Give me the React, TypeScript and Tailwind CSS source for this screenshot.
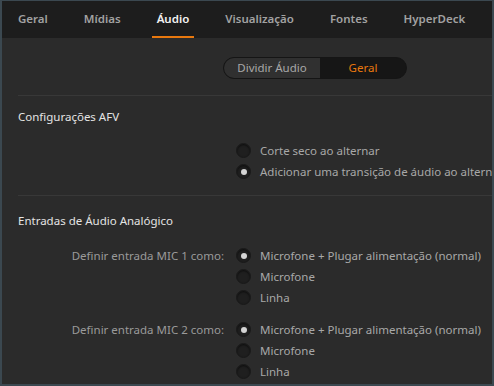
import React from 'react';

const TABS = ['Geral', 'Mídias', 'Áudio', 'Visualização', 'Fontes', 'HyperDeck'];

function Radio({ checked }: { checked?: boolean }) {
  return (
    <span className="flex h-[15px] w-[15px] shrink-0 items-center justify-center rounded-full border border-[#191919] bg-[#1f1f1f] shadow-[inset_0_1px_2px_rgba(0,0,0,0.6)]">
      {checked && <span className="h-[6px] w-[6px] rounded-full bg-[#d4d4d4]" />}
    </span>
  );
}

function RadioGroup({ label, options, selected }: { label?: string; options: string[]; selected: number }) {
  return (
    <div className="flex">
      <div className="w-[222px] shrink-0 whitespace-nowrap text-right leading-[21px] text-[#9a9a9a]">{label}</div>
      <div className="ml-[12px] flex flex-col">
        {options.map((opt, i) => (
          <div key={opt} className="flex h-[21px] items-center gap-[9px] whitespace-nowrap text-[#a8a8a8]">
            <Radio checked={i === selected} />
            <span>{opt}</span>
          </div>
        ))}
      </div>
    </div>
  );
}

export default function App() {
  return (
    <div className="h-[386px] w-[494px] overflow-hidden border-2 border-t border-[#3b4850] bg-[#2b2b2b] font-['Noto_Sans',sans-serif] text-[11.5px]">
      {/* Tabs */}
      <div className="flex h-[37px] items-stretch gap-[36px] bg-[#1d1d1d] pl-[16px]">
        {TABS.map(t => (
          <div
            key={t}
            className={
              'flex items-center whitespace-nowrap border-b-2 pt-[1px] text-[11.5px] font-semibold ' +
              (t === 'Áudio' ? '-mx-[5px] border-[#e8780e] px-[5px] text-[#f2f2f2]' : 'border-transparent text-[#a2a2a2]')
            }
          >
            {t}
          </div>
        ))}
      </div>

      {/* Segmented control */}
      <div className="flex justify-center pt-[19px] pl-[136px]">
        <div className="flex h-[22px] w-[184px] overflow-hidden rounded-full border border-[#151515] bg-[#161616]">
          <div className="flex w-[96px] items-center justify-center bg-[#303030] text-[#a8a8a8]">Dividir Áudio</div>
          <div className="flex flex-1 items-center justify-center text-[#e8780e]">Geral</div>
        </div>
      </div>

      <div className="ml-[16px] mt-[16px] border-t border-[#383838]" />

      {/* AFV */}
      <div className="pl-[16px] pt-[11px] leading-[20px] text-[#e4e4e4]">Configurações AFV</div>
      <div className="mt-[13px]">
        <RadioGroup options={['Corte seco ao alternar', 'Adicionar uma transição de áudio ao alternar']} selected={1} />
      </div>

      <div className="ml-[16px] mt-[13px] border-t border-[#383838]" />

      {/* Analog */}
      <div className="pl-[16px] pt-[15px] leading-[20px] text-[#e4e4e4]">Entradas de Áudio Analógico</div>
      <div className="mt-[14px] flex flex-col gap-[11px]">
        <RadioGroup label="Definir entrada MIC 1 como:" options={['Microfone + Plugar alimentação (normal)', 'Microfone', 'Linha']} selected={0} />
        <RadioGroup label="Definir entrada MIC 2 como:" options={['Microfone + Plugar alimentação (normal)', 'Microfone', 'Linha']} selected={0} />
      </div>
    </div>
  );
}
